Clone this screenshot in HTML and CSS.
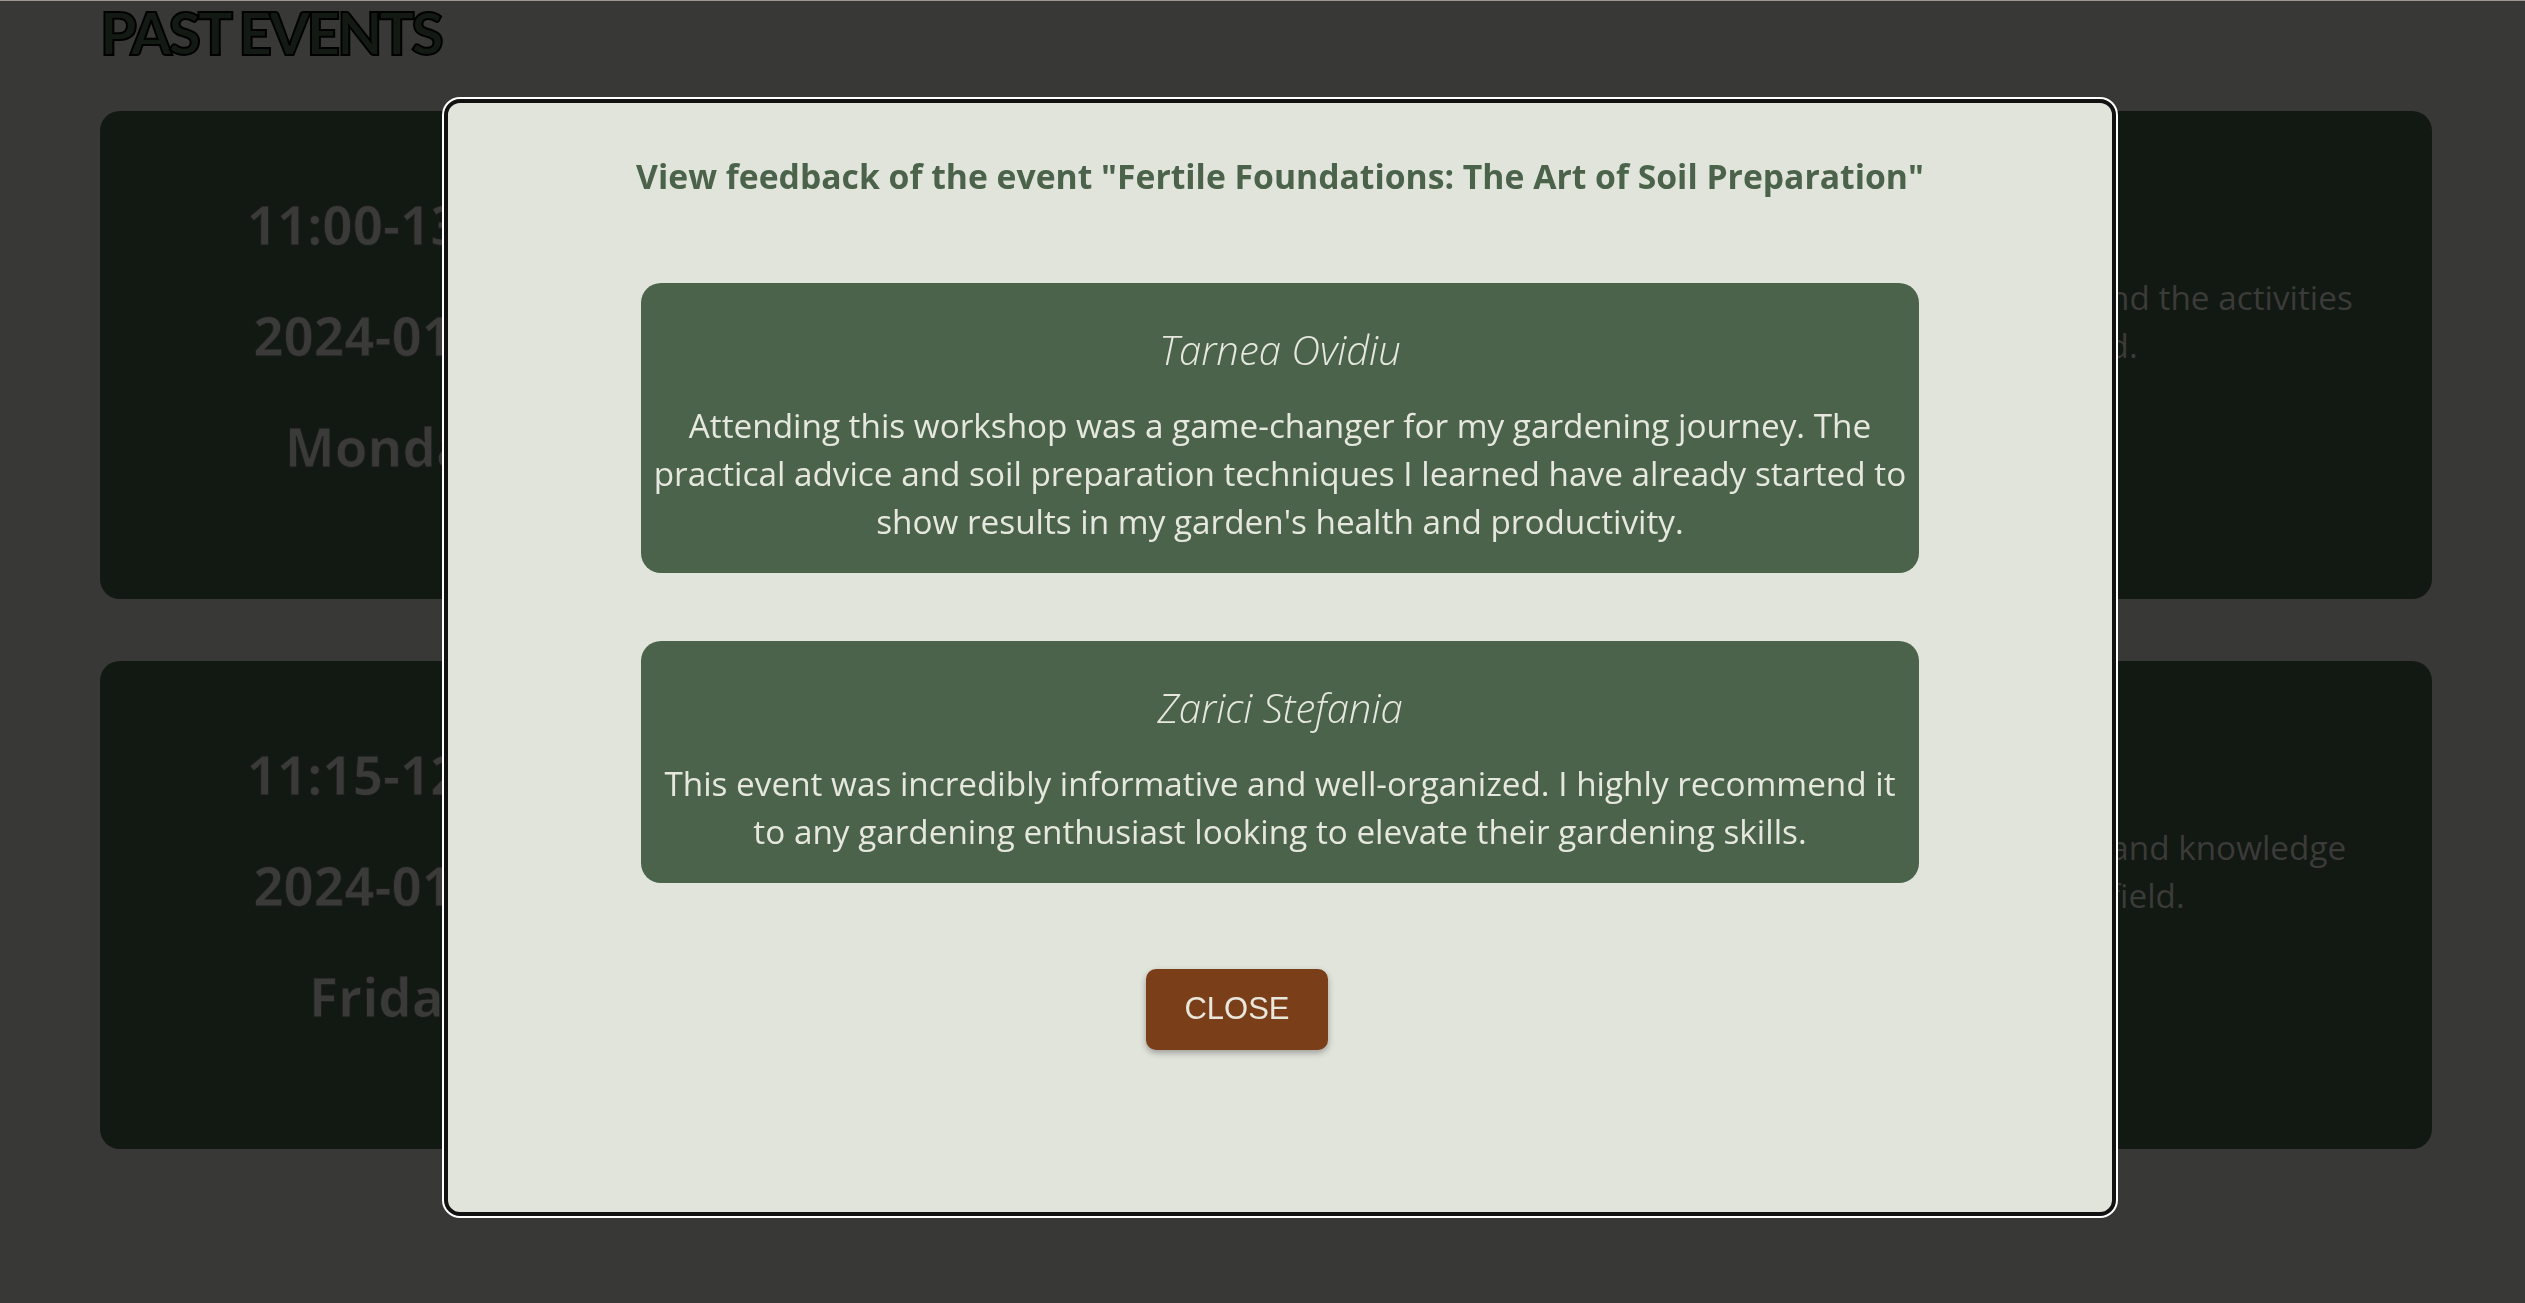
FILE: index.html
```html
<!DOCTYPE html>
<html lang="en">
<head>
<meta charset="utf-8">
<title>Past Events</title>
<link rel="stylesheet" href="styles.css">
</head>
<body>
<main class="page">
  <h1 class="page-title">PAST EVENTS</h1>
  <section class="events">
    <article class="event">
      <div class="event-when">
        <p>11:00-13:00</p>
        <p>2024-01-15</p>
        <p>Monday</p>
      </div>
      <div class="event-body">
        <h2 class="event-name">Fertile Foundations: The Art of Soil Preparation</h2>
        <p class="event-desc">Learn how to build healthy, fertile soil through composting, soil testing and mulching, and the activities<br>that keep a garden productive all the year round, with each step explained.</p>
      </div>
    </article>
    <article class="event">
      <div class="event-when">
        <p>11:15-12:45</p>
        <p>2024-01-19</p>
        <p>Friday</p>
      </div>
      <div class="event-body">
        <h2 class="event-name">Growing Together: Community Garden Skills</h2>
        <p class="event-desc">Meet expert growers and learn methods for planting, pruning and harvesting with tips and knowledge<br>gathered from years of hands-on experience growing crops in a garden and field.</p>
      </div>
    </article>
  </section>
</main>

<div class="modal">
  <h3 class="modal-title">View feedback of the event "Fertile Foundations: The Art of Soil Preparation"</h3>
  <div class="feedback-list">
    <div class="feedback">
      <p class="feedback-name">Tarnea Ovidiu</p>
      <p class="feedback-text">Attending this workshop was a game-changer for my gardening journey. The practical advice and soil preparation techniques I learned have already started to show results in my garden's health and productivity.</p>
    </div>
    <div class="feedback">
      <p class="feedback-name">Zarici Stefania</p>
      <p class="feedback-text">This event was incredibly informative and well-organized. I highly recommend it to any gardening enthusiast looking to elevate their gardening skills.</p>
    </div>
  </div>
  <div class="modal-actions">
    <button class="close-btn" type="button">CLOSE</button>
  </div>
</div>
</body>
</html>
```

FILE: styles.css
```css
* { box-sizing: border-box; }

html, body {
  margin: 0;
  padding: 0;
}

body {
  background: #383836;
  border-top: 1px solid #a09590;
  font-family: "Open Sans", "Noto Sans", sans-serif;
  min-height: 1303px;
  overflow: hidden;
}

.page {
  padding: 0 93px 0 100px;
}

.page-title {
  margin: 0;
  font-family: "Lato", sans-serif;
  font-weight: 900;
  font-size: 59px;
  line-height: 64px;
  letter-spacing: -3.5px;
  color: #131a13;
  -webkit-text-stroke: 2px #000;
}

.events {
  margin-top: 46px;
  display: flex;
  flex-direction: column;
  gap: 62px;
}

.event {
  height: 488px;
  background: #121812;
  border-radius: 20px;
  display: flex;
}

.event-when {
  width: 25%;
  padding-top: 78px;
  display: flex;
  flex-direction: column;
  gap: 39px;
  text-align: center;
}

.event-when p {
  margin: 0;
  font-weight: 700;
  font-size: 53px;
  line-height: 72px;
  color: #3a3a38;
  -webkit-text-stroke: 1px #1a1c19;
}

.event-body {
  flex: 1;
  padding: 60px 40px 0;
  text-align: center;
}

.event-name {
  margin: 0 0 46px;
  font-size: 40px;
  line-height: 56px;
  color: #3a3a38;
}

.event-desc {
  margin: 0;
  font-size: 33.3px;
  line-height: 48px;
  color: #3b3b39;
  white-space: nowrap;
}

/* Modal */
.modal {
  position: fixed;
  left: 444px;
  top: 99px;
  width: 1672px;
  height: 1117px;
  background: #e1e4db;
  border: 4px solid #121212;
  border-radius: 16px;
  box-shadow: 0 0 0 2px #ffffff;
  padding-top: 53px;
}

.modal-title {
  margin: 0;
  text-align: center;
  font-weight: 700;
  font-size: 33.7px;
  line-height: 40px;
  color: #4b634a;
}

.feedback-list {
  margin: 87px auto 0;
  width: 1278px;
  display: flex;
  flex-direction: column;
  gap: 68px;
}

.feedback {
  background: #4b634a;
  border-radius: 20px;
  padding: 41px 10px 28px;
  text-align: center;
  color: #e6e8df;
}

.feedback-name {
  margin: 0 0 25px;
  font-style: italic;
  font-weight: 300;
  font-size: 40px;
  line-height: 52px;
}

.feedback-text {
  margin: 0;
  font-size: 33.3px;
  line-height: 48px;
}

.modal-actions {
  margin-top: 86px;
  display: flex;
  justify-content: center;
  padding-right: 86px;
}

.close-btn {
  font-family: "Liberation Sans", Arial, sans-serif;
  font-size: 31px;
  line-height: 35px;
  padding: 22px 38px 24px;
  background: #7a3f19;
  color: #e9e6dc;
  border: none;
  border-radius: 10px;
  box-shadow: 0 3px 6px rgba(0, 0, 0, 0.3);
}
```
